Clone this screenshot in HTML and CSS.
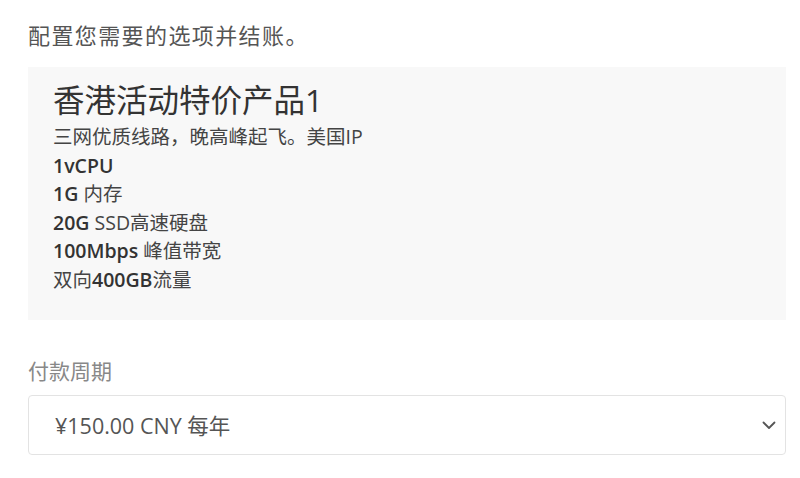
FILE: index.html
```html
<!DOCTYPE html>
<html lang="zh-CN">
<head>
<meta charset="utf-8">
<link rel="stylesheet" href="styles.css">
</head>
<body>
<div class="page">
  <p class="intro">配置您需要的选项并结账。</p>
  <div class="product">
    <h2 class="title">香港活动特价产品1</h2>
    <div class="desc">
      <div>三网优质线路，晚高峰起飞。美国IP</div>
      <div><b>1vCPU</b></div>
      <div><b>1G</b> 内存</div>
      <div><b>20G</b> SSD高速硬盘</div>
      <div><b>100Mbps</b> 峰值带宽</div>
      <div>双向<b>400GB</b>流量</div>
    </div>
  </div>
  <div class="field">
    <label class="label">付款周期</label>
    <div class="select">
      <span class="value">¥150.00 CNY 每年</span>
      <svg class="chev" width="14" height="9" viewBox="0 0 14 9"><path d="M1.5 1.5 L7 7 L12.5 1.5" fill="none" stroke="#555" stroke-width="1.8" stroke-linecap="round" stroke-linejoin="round"/></svg>
    </div>
  </div>
</div>
</body>
</html>
```
FILE: styles.css
```css
html, body { margin: 0; padding: 0; background: #fff; }
body { font-family: "Open Sans", "Noto Sans CJK SC", sans-serif; }
.page { padding: 0 14px 0 28px; }
.intro { margin: 0; padding-top: 20px; font-size: 22px; line-height: 30px; color: #555; letter-spacing: 1.4px; }
.product { margin-top: 17px; background: #f8f8f8; height: 253px; box-sizing: border-box; padding: 13px 25px 0 25px; }
.title { margin: 0; font-weight: 400; font-size: 31.5px; line-height: 40px; color: #333; }
.desc { font-size: 19.5px; line-height: 28.6px; color: #444; margin-top: 3px; }
.desc b { font-weight: 600; color: #333; }
.field { margin-top: 36px; }
.label { display: block; font-size: 21px; line-height: 30px; color: #888; }
.select { margin-top: 9px; height: 60px; box-sizing: border-box; border: 1px solid #e3e3e3; border-radius: 4px; display: flex; align-items: center; justify-content: space-between; padding: 0 9px 2px 26px; }
.value { font-size: 21.5px; color: #555; }
.chev { display: block; margin-top: 2px; }
```
